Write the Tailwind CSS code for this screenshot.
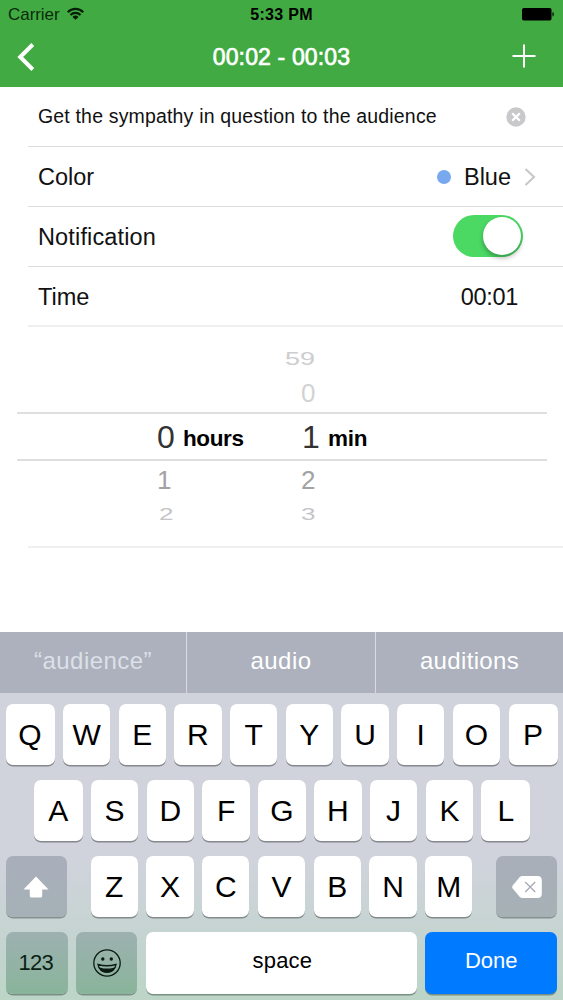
<!DOCTYPE html>
<html lang="en">
<head>
<meta charset="utf-8">
<title>Edit item</title>
<script src="https://cdn.jsdelivr.net/npm/@tailwindcss/browser@4"></script>
</head>
<body class="bg-white">
<div class="flex h-[1000px] w-[563px] flex-col overflow-hidden bg-white font-['Liberation_Sans',Arial,sans-serif] text-[#111]">
  <header class="h-[87px] shrink-0 bg-[#41aa42]">
    <div class="grid h-7 grid-cols-3 items-center pt-px pr-2 pl-2 text-black">
      <div class="flex items-center gap-[7px] text-[17px] text-[#0c2a0c]"><span class="tracking-[-0.05px]">Carrier</span>
        <svg class="-mt-[3px] h-[13px] w-[17px]" viewBox="0 0 17 13" fill="none" stroke="#061d06" stroke-width="2.200"><path d="M.8 5.200a10.800 10.800 0 0 1 15.400 0M3.500 8a7 7 0 0 1 10 0"/><path d="M8.500 12.800 5.500 9.900a4 4 0 0 1 6 0z" fill="#061d06" stroke="none"/></svg>
      </div>
      <div class="text-center text-base font-bold tracking-[0.3px]"><span>5:33 PM</span></div>
      <div class="flex justify-end"><svg class="-mt-px h-[14px] w-[34px]" viewBox="0 0 34 14"><rect x="1" y="1" width="29.500" height="12.500" rx="1.800"/><path d="M31.500 5c1.700.4 1.700 4 0 4.500z"/></svg></div>
    </div>
    <div class="grid h-[59px] grid-cols-3 items-center pr-[27px] pl-[16px] text-white">
      <svg class="-mt-px h-[30px] w-[20px]" viewBox="0 0 20 30" fill="none" stroke="currentColor" stroke-width="4"><path d="M16.800 2.500 4.200 15l12.600 12.500"/></svg>
      <h1 class="ml-[11px] text-center text-[23px] font-normal tracking-[0.150px] whitespace-nowrap [-webkit-text-stroke:0.700px_white]">00:02 - 00:03</h1>
      <svg class="-mt-[3px] h-6 w-6 justify-self-end" viewBox="0 0 24 24" fill="none" stroke="currentColor" stroke-width="2"><path d="M12 .5v23M.5 12h23"/></svg>
    </div>
  </header>

  <main class="flex h-[545px] shrink-0 flex-col">
    <div class="ml-7 flex h-[60px] items-center justify-between border-b border-[#dedede] pr-[37px] pl-[10px]">
      <span class="text-[19.500px] tracking-[0.170px]">Get the sympathy in question to the audience</span>
      <svg class="mt-px size-5" viewBox="0 0 20 20"><circle cx="10" cy="10" r="9.700" fill="#c9c9cb"/><path d="m6.200 6.200 7.600 7.600m0-7.600-7.600 7.600" stroke="#fff" stroke-width="2.200"/></svg>
    </div>
    <div class="ml-7 flex h-[60px] items-center border-b border-[#dedede] pr-[26px] pl-[10px] text-[23.500px]">
      <span class="pt-[2px]">Color</span>
      <i class="ml-auto size-[14px] rounded-full bg-[#78a9ee]"></i>
      <span class="ml-[13px] pt-[2px]">Blue</span>
      <svg class="mr-px ml-[13px] h-5 w-3" viewBox="0 0 12 20" fill="none" stroke="#c9c9cc" stroke-width="2.200"><path d="m1.500 2 8.500 8-8.500 8"/></svg>
    </div>
    <div class="ml-7 flex h-[60px] items-center justify-between border-b border-[#dedede] pr-[40.500px] pl-[10px] text-[23.500px]">
      <span class="pt-[2px] tracking-[0.150px]">Notification</span>
      <span class="mb-px flex h-[42.500px] w-[69.500px] items-center justify-end rounded-full bg-[#4bd964] pr-[2px]"><i class="size-[38px] rounded-full bg-white shadow-[0_3px_5px_rgba(0,0,0,0.3)]"></i></span>
    </div>
    <div class="ml-7 flex h-[60px] items-center justify-between border-b-2 border-[#efefef] pr-[45px] pl-[10px] text-[23.500px]">
      <span class="pt-[3px]">Time</span><span class="pt-[3px] tracking-[-0.300px]">00:01</span>
    </div>
    <div class="relative h-[221px]">
      <div class="absolute top-[85px] right-4 left-[17px] h-[49px] border-y-2 border-[#dfdfe1]"></div>
      <div class="absolute right-0 bottom-0 left-7 h-[2px] bg-[#f0f0f0]"></div>
      <div class="absolute top-0 left-[157px] w-[90px]">
        <div class="absolute top-[92px] left-0 text-[32px] leading-[36px] text-[#333]">0</div>
        <div class="absolute top-[100px] left-[26px] text-[22.500px] leading-[24px] font-bold tracking-[-0.400px] text-black">hours</div>
        <div class="absolute top-[140px] left-0 text-[26px] leading-[26px] text-[#a2a2a5]">1</div>
        <div class="absolute top-[174px] left-[2px] origin-center scale-y-[0.65] text-[26px] leading-[26px] text-[#c5c5c8]">2</div>
      </div>
      <div class="absolute top-0 left-[285px] w-[90px]">
        <div class="absolute top-[19px] left-0 origin-center scale-y-[0.65] text-[27px] leading-[26px] text-[#cdcdd0]">59</div>
        <div class="absolute top-[53px] left-[16px] text-[26px] leading-[26px] text-[#d2d2d5]">0</div>
        <div class="absolute top-[92px] left-[17px] text-[32px] leading-[36px] text-[#333]">1</div>
        <div class="absolute top-[100px] left-[43px] text-[22.500px] leading-[24px] font-bold tracking-[-0.300px] text-black">min</div>
        <div class="absolute top-[140px] left-[16px] text-[26px] leading-[26px] text-[#a2a2a5]">2</div>
        <div class="absolute top-[174px] left-[16px] origin-center scale-y-[0.65] text-[26px] leading-[26px] text-[#c5c5c8]">3</div>
      </div>
    </div>
  </main>

  <section class="flex h-[368px] shrink-0 flex-col bg-linear-to-b from-[#d0d3dc] from-[62%] to-[#bcd5c7]">
    <div class="grid h-[61px] shrink-0 grid-cols-[187px_189px_187px] bg-[#acb1bd] text-center text-[24px] leading-[57px] text-white">
      <span class="border-r border-[#d8dbe2] tracking-[0.450px] text-[#dde0e7]">“audience”</span>
      <span class="border-r border-[#d8dbe2] tracking-[0.450px]">audio</span>
      <span class="tracking-[0.350px]">auditions</span>
    </div>
    <div class="mt-[11px] grid h-[61px] shrink-0 grid-cols-[49px_repeat(8,1fr)_49px] gap-x-[8.400px] px-[5.500px] text-center text-[30px] leading-[61px] text-black *:rounded-[7px] *:bg-white *:shadow-[0_1.500px_0_#85888e]">
      <span>Q</span><span>W</span><span>E</span><span>R</span><span>T</span><span>Y</span><span>U</span><span>I</span><span>O</span><span>P</span>
    </div>
    <div class="mt-[15px] grid h-[61px] shrink-0 grid-cols-[48.500px_repeat(7,1fr)_48.500px] gap-x-[8.400px] pr-[33px] pl-[34px] text-center text-[30px] leading-[61px] text-black *:rounded-[7px] *:bg-white *:shadow-[0_1.500px_0_#85888e]">
      <span>A</span><span>S</span><span>D</span><span>F</span><span>G</span><span>H</span><span>J</span><span>K</span><span>L</span>
    </div>
    <div class="mt-[15px] flex h-[61px] shrink-0 justify-between px-[6px]">
      <span class="flex w-[61px] items-center justify-center rounded-[7px] bg-linear-to-b from-[#a9aebb] to-[#a5b1b6] shadow-[0_1.500px_0_#85908f]">
        <svg class="mr-[2px] h-[22px] w-[26px]" viewBox="0 0 26 22" fill="#fff"><path d="M13 .5 25.500 13.500H19.200V20Q19.200 21.500 17.700 21.500H8.300Q6.800 21.500 6.800 20V13.500H.5z"/></svg>
      </span>
      <div class="grid w-[382px] grid-cols-7 gap-x-[8.400px] text-center text-[30px] leading-[61px] text-black *:rounded-[7px] *:bg-white *:shadow-[0_1.500px_0_#858b8b]">
        <span>Z</span><span>X</span><span>C</span><span>V</span><span>B</span><span>N</span><span>M</span>
      </div>
      <span class="flex w-[61px] items-center justify-center rounded-[7px] bg-linear-to-b from-[#a9aeb9] to-[#a6b1b5] shadow-[0_1.500px_0_#85908f]">
        <svg class="h-[22px] w-[30px]" viewBox="0 0 30 22"><path d="M10.500 0H25.500Q29.800 0 29.800 4.300V17.700Q29.800 22 25.500 22H10.500Q8.800 22 7.600 20.800L.7 12.500Q-.3 11 .7 9.500L7.600 1.200Q8.800 0 10.500 0z" fill="#fff"/><path d="m13.200 6 10 10m0-10-10 10" fill="none" stroke="#a6acb5" stroke-width="1.300"/></svg>
      </span>
    </div>
    <div class="mt-[15px] grid h-[61.500px] shrink-0 grid-cols-[61.500px_61px_270.500px_131.500px] justify-between px-[6px] text-center text-[22px] leading-[58px] *:rounded-[7px] *:shadow-[0_1.500px_0_#799083]">
      <span class="bg-linear-to-b from-[#9db1b0] to-[#89b49b] pr-[2px] leading-[62px] tracking-[-0.800px] text-[#0c1f16]">123</span>
      <span class="flex items-center justify-center bg-linear-to-b from-[#9db1b0] to-[#89b49b]">
        <svg class="size-7" viewBox="0 0 28 28" fill="none" stroke="#0b1a12" stroke-width="1.300"><circle cx="14" cy="14" r="13.200"/><circle cx="9.800" cy="10" r="1.700" fill="#0b1a12" stroke="none"/><circle cx="18.300" cy="10" r="1.700" fill="#0b1a12" stroke="none"/><path d="M5 15.500q9 2.500 18 0-1.500 7.700-9 7.700T5 15.500z"/><path d="M6.500 19q7.500 2.500 15 0-2.500 4.200-7.500 4.200T6.500 19z" fill="#0b1a12"/></svg>
      </span>
      <span class="bg-white pl-[2px] tracking-[0.200px] text-black">space</span>
      <span class="bg-[#007aff] text-white">Done</span>
    </div>
  </section>
</div>
</body>
</html>
